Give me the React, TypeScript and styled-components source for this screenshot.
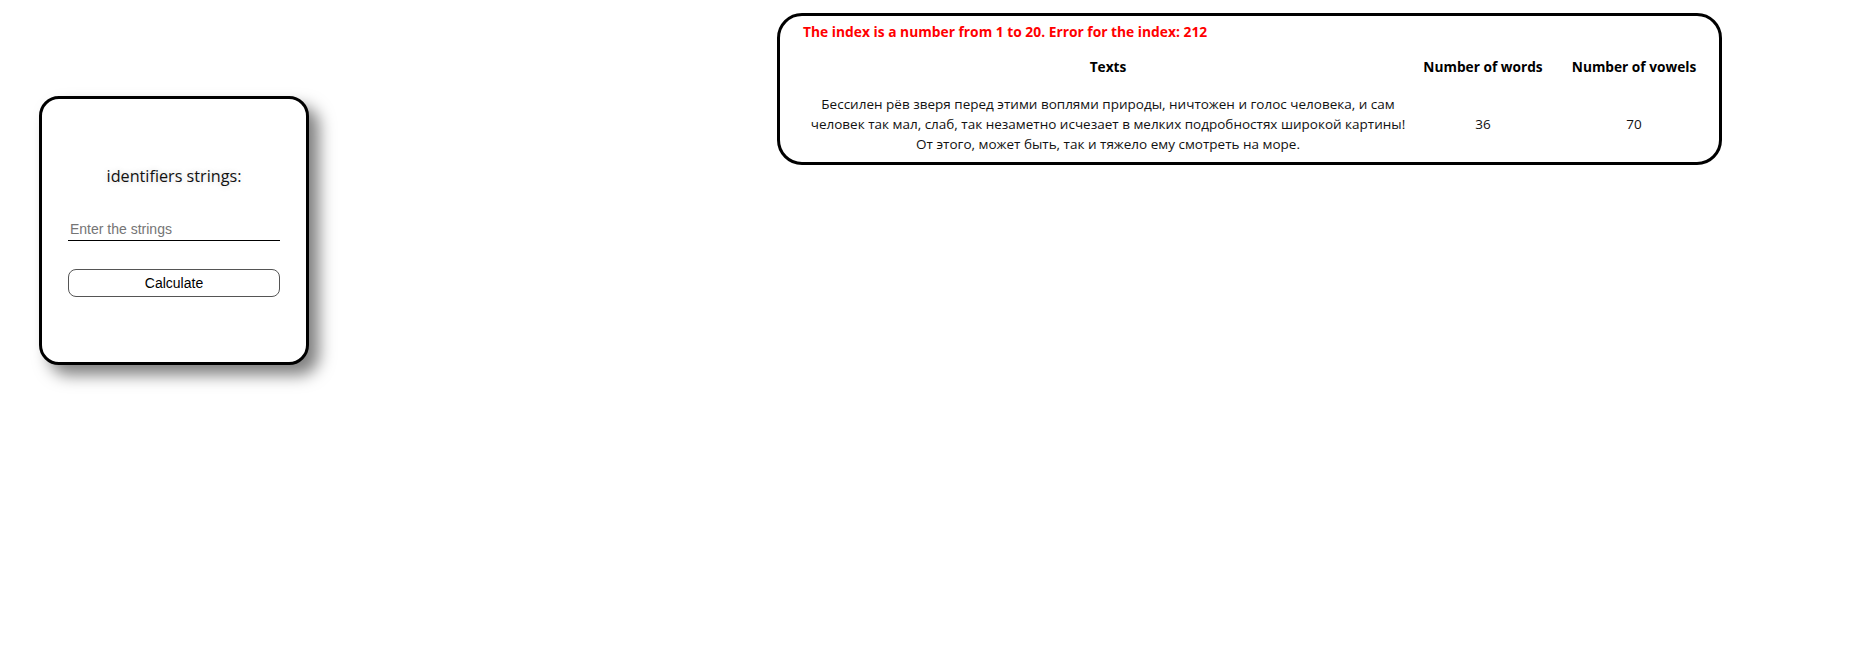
import React from "react";
import styled, { createGlobalStyle } from "styled-components";

const GlobalStyle = createGlobalStyle`
  html, body { margin: 0; padding: 0; background: #fff; }
  body { font-family: "Open Sans", "Noto Sans", sans-serif; }
`;

const Page = styled.div`
  display: flex;
  align-items: flex-start;
  padding: 13px 0 0 39px;
  width: 1875px;
  height: 657px;
  box-sizing: border-box;
`;

const Card = styled.div`
  margin-top: 83px;
  width: 270px;
  height: 269px;
  box-sizing: border-box;
  border: 3px solid #000;
  border-radius: 20px;
  box-shadow: 10px 10px 16px rgba(0, 0, 0, 0.5);
  display: flex;
  flex-direction: column;
  align-items: center;
  padding-top: 67px;
  background: #fff;
`;

const Title = styled.div`
  font-family: "Open Sans", "Noto Sans", sans-serif;
  font-size: 16.2px;
  line-height: 20px;
  color: #111;
  text-shadow: 0 0 6px rgba(0, 0, 0, 0.18);
`;

const Input = styled.input`
  margin-top: 31px;
  width: 212px;
  height: 24px;
  box-sizing: border-box;
  border: none;
  border-bottom: 1px solid #000;
  outline: none;
  padding: 1px 2px;
  font-family: "Liberation Sans", Arial, sans-serif;
  font-size: 14px;
  &::placeholder { color: #757575; }
`;

const Button = styled.button`
  margin-top: 28px;
  width: 212px;
  height: 28px;
  box-sizing: border-box;
  border: 1px solid #555;
  border-radius: 8px;
  background: #fff;
  font-family: "Liberation Sans", Arial, sans-serif;
  font-size: 14px;
  color: #000;
  padding: 0;
`;

const Panel = styled.div`
  margin-left: 468px;
  width: 945px;
  height: 152px;
  box-sizing: border-box;
  border: 3px solid #000;
  border-radius: 25px;
  padding: 6px 0 0 23px;
  font-family: "Open Sans", "Noto Sans", sans-serif;
`;

const ErrorText = styled.div`
  color: #ff0000;
  font-weight: 700;
  font-size: 13.8px;
  line-height: 20px;
`;

const Table = styled.table`
  border-collapse: collapse;
  table-layout: fixed;
  width: 912px;
  font-size: 13.5px;
  color: #111;
`;

const Th = styled.th<{ $w: number }>`
  width: ${(p) => p.$w}px;
  font-weight: 700;
  font-size: 13.7px;
  color: #000;
  padding: 15px 0 16px;
  line-height: 20px;
  text-align: center;
`;

const Td = styled.td`
  text-align: center;
  line-height: 20px;
  padding: 1px 0;
  white-space: nowrap;
`;

export default function App() {
  return (
    <>
      <GlobalStyle />
      <Page>
        <Card>
          <Title>identifiers strings:</Title>
          <Input placeholder="Enter the strings" />
          <Button>Calculate</Button>
        </Card>
        <Panel>
          <ErrorText>The index is a number from 1 to 20. Error for the index: 212</ErrorText>
          <Table>
            <thead>
              <tr>
                <Th $w={610}>Texts</Th>
                <Th $w={140}>Number of words</Th>
                <Th $w={162}>Number of vowels</Th>
              </tr>
            </thead>
            <tbody>
              <tr>
                <Td>
                  Бессилен рёв зверя перед этими воплями природы, ничтожен и голос человека, и сам
                  <br />
                  человек так мал, слаб, так незаметно исчезает в мелких подробностях широкой картины!
                  <br />
                  От этого, может быть, так и тяжело ему смотреть на море.
                </Td>
                <Td>36</Td>
                <Td>70</Td>
              </tr>
            </tbody>
          </Table>
        </Panel>
      </Page>
    </>
  );
}
